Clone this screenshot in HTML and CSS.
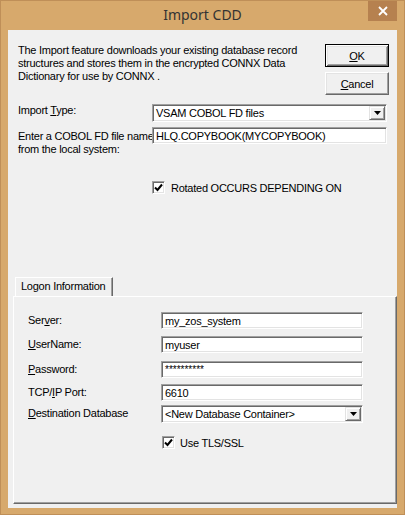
FILE: index.html
```html
<!DOCTYPE html>
<html>
<head>
<meta charset="utf-8">
<link rel="stylesheet" href="styles.css">
</head>
<body>
<div class="window">
  <div class="titlebar">
    <span class="spacer"></span>
    <div class="title">Import CDD</div>
    <div class="close-wrap">
      <div class="close">
        <svg width="10" height="10" viewBox="0 0 10 10"><path d="M1 1 L9 9 M9 1 L1 9" stroke="#fff" stroke-width="1.8" fill="none"/></svg>
      </div>
    </div>
  </div>
  <div class="client">
    <div class="top">
      <p class="intro">The Import feature downloads your existing database record<br>structures and stores them in the encrypted CONNX Data<br>Dictionary for use by CONNX .</p>
      <div class="buttons">
        <div class="btn default"><u>O</u>K</div>
        <div class="btn"><u>C</u>ancel</div>
      </div>
    </div>
    <div class="form">
      <div class="label">Import <u>T</u>ype:</div>
      <div class="combo"><span class="combo-text">VSAM COBOL FD files</span><span class="drop"><svg width="7" height="4" viewBox="0 0 7 4"><path d="M0 0 H7 L3.5 4 Z" fill="#000"/></svg></span></div>
      <div class="label two">Enter a COBOL FD file name<br>from the local system:</div>
      <div class="field">HLQ.COPYBOOK(MYCOPYBOOK)</div>
    </div>
    <div class="check rotated">
      <span class="box"><svg width="9" height="9" viewBox="0 0 9 9"><path d="M1 4.5 L3.5 7 L8 1.5" stroke="#000" stroke-width="2" fill="none"/></svg></span>
      <span>Rotated OCCURS DEPENDING ON</span>
    </div>
    <div class="tabs">
      <div class="tab">Logon Information</div>
      <div class="panel">
        <div class="pform">
          <div class="plabel">Ser<u>v</u>er:</div>
          <div class="field">my_zos_system</div>
          <div class="plabel"><u>U</u>serName:</div>
          <div class="field">myuser</div>
          <div class="plabel"><u>P</u>assword:</div>
          <div class="field pw">**********</div>
          <div class="plabel">TCP/<u>I</u>P Port:</div>
          <div class="field">6610</div>
          <div class="plabel"><u>D</u>estination Database</div>
          <div class="combo"><span class="combo-text">&lt;New Database Container&gt;</span><span class="drop"><svg width="7" height="4" viewBox="0 0 7 4"><path d="M0 0 H7 L3.5 4 Z" fill="#000"/></svg></span></div>
        </div>
        <div class="check tls">
          <span class="box"><svg width="9" height="9" viewBox="0 0 9 9"><path d="M1 4.5 L3.5 7 L8 1.5" stroke="#000" stroke-width="2" fill="none"/></svg></span>
          <span>Use TLS/SSL</span>
        </div>
      </div>
    </div>
  </div>
</div>
</body>
</html>
```

FILE: styles.css
```css
html, body {
  margin: 0;
  padding: 0;
  background: #d7a96c;
}
.window {
  width: 405px;
  height: 515px;
  box-sizing: border-box;
  border: 1px solid #bf8f58;
  background: #d7a96c;
  padding: 0 7px 6px 7px;
  display: flex;
  flex-direction: column;
  font-family: "Liberation Sans", Arial, sans-serif;
  font-size: 11px;
  letter-spacing: -0.25px;
  color: #000;
}
.titlebar {
  height: 29px;
  display: grid;
  grid-template-columns: 1fr auto 1fr;
  align-items: start;
}
.title {
  font-family: "Noto Sans", "Open Sans", sans-serif;
  font-size: 14px;
  letter-spacing: 0;
  color: #333;
  line-height: 28px;
}
.close-wrap {
  display: flex;
  justify-content: flex-end;
}
.close {
  width: 29px;
  height: 20px;
  background: #b6814f;
  display: flex;
  align-items: center;
  justify-content: center;
}
.client {
  flex: 1;
  background: #f0f0f0;
  padding: 14px 0 0 10px;
  box-sizing: border-box;
}
.top {
  display: flex;
}
.intro {
  margin: 0;
  width: 307px;
  line-height: 13px;
}
.buttons {
  display: flex;
  flex-direction: column;
  gap: 5px;
}
.btn {
  width: 64px;
  height: 23px;
  box-sizing: border-box;
  display: flex;
  align-items: center;
  justify-content: center;
  background: #f0f0f0;
  border: 1px solid;
  border-color: #fff #696969 #696969 #fff;
  box-shadow: inset -1px -1px #a0a0a0, inset 1px 1px #e3e3e3;
}
.btn.default {
  border: 1px solid #000;
  box-shadow: inset 1px 1px #fff, inset -1px -1px #696969, inset 2px 2px #e3e3e3, inset -2px -2px #a0a0a0;
}
.form {
  margin-top: 9px;
  display: grid;
  grid-template-columns: 134px 235px;
  grid-template-rows: 18px 17px;
  row-gap: 5px;
}
.label {
  line-height: 13px;
  white-space: nowrap;
}
.label.two {
  margin-top: 3px;
}
.field, .combo {
  position: relative;
  box-sizing: border-box;
  background: #fff;
  border: 1px solid;
  border-color: #a0a0a0 #fff #fff #a0a0a0;
  box-shadow: inset 1px 1px #696969, inset -1px -1px #e3e3e3;
  padding-left: 3px;
  display: flex;
  align-items: center;
  white-space: nowrap;
}
.field {
  height: 17px;
}
.combo {
  height: 18px;
  justify-content: space-between;
  padding-right: 1px;
}
.drop {
  width: 16px;
  height: 14px;
  box-sizing: border-box;
  background: #f0f0f0;
  border: 1px solid;
  border-color: #e3e3e3 #696969 #696969 #e3e3e3;
  box-shadow: inset 1px 1px #fff, inset -1px -1px #a0a0a0;
  display: flex;
  align-items: center;
  justify-content: center;
}
.check {
  display: flex;
  align-items: center;
  gap: 6px;
  height: 13px;
}
.check.rotated {
  margin-top: 37px;
  padding-left: 134px;
}
.box {
  width: 13px;
  height: 13px;
  box-sizing: border-box;
  background: #fff;
  border: 1px solid;
  border-color: #a0a0a0 #fff #fff #a0a0a0;
  box-shadow: inset 1px 1px #696969, inset -1px -1px #e3e3e3;
  display: flex;
  align-items: center;
  justify-content: center;
}
.tabs {
  margin-top: 83px;
  margin-left: -5px;
}
.tab {
  margin-left: 2px;
  width: 98px;
  height: 19px;
  box-sizing: border-box;
  border-top: 1px solid #fff;
  border-left: 1px solid #fff;
  border-right: 1px solid #696969;
  box-shadow: inset -1px 0 #a0a0a0;
  padding-left: 5px;
  line-height: 17px;
  white-space: nowrap;
  position: relative;
  z-index: 1;
  background: #f0f0f0;
}
.panel {
  width: 384px;
  height: 208px;
  box-sizing: border-box;
  border: 1px solid;
  border-color: #fff #696969 #696969 #fff;
  box-shadow: inset -1px -1px #a0a0a0;
  padding: 15px 0 0 14px;
}
.pform {
  display: grid;
  grid-template-columns: 133px 202px;
  grid-template-rows: 24px 25px 23px 21px 18px;
}
.plabel {
  line-height: 17px;
  white-space: nowrap;
}
.field.pw {
  font-size: 10px;
  letter-spacing: 0;
  align-items: flex-start;
  padding-top: 2px;
}
.check.tls {
  margin-top: 13px;
  padding-left: 134px;
  gap: 5px;
}
```
